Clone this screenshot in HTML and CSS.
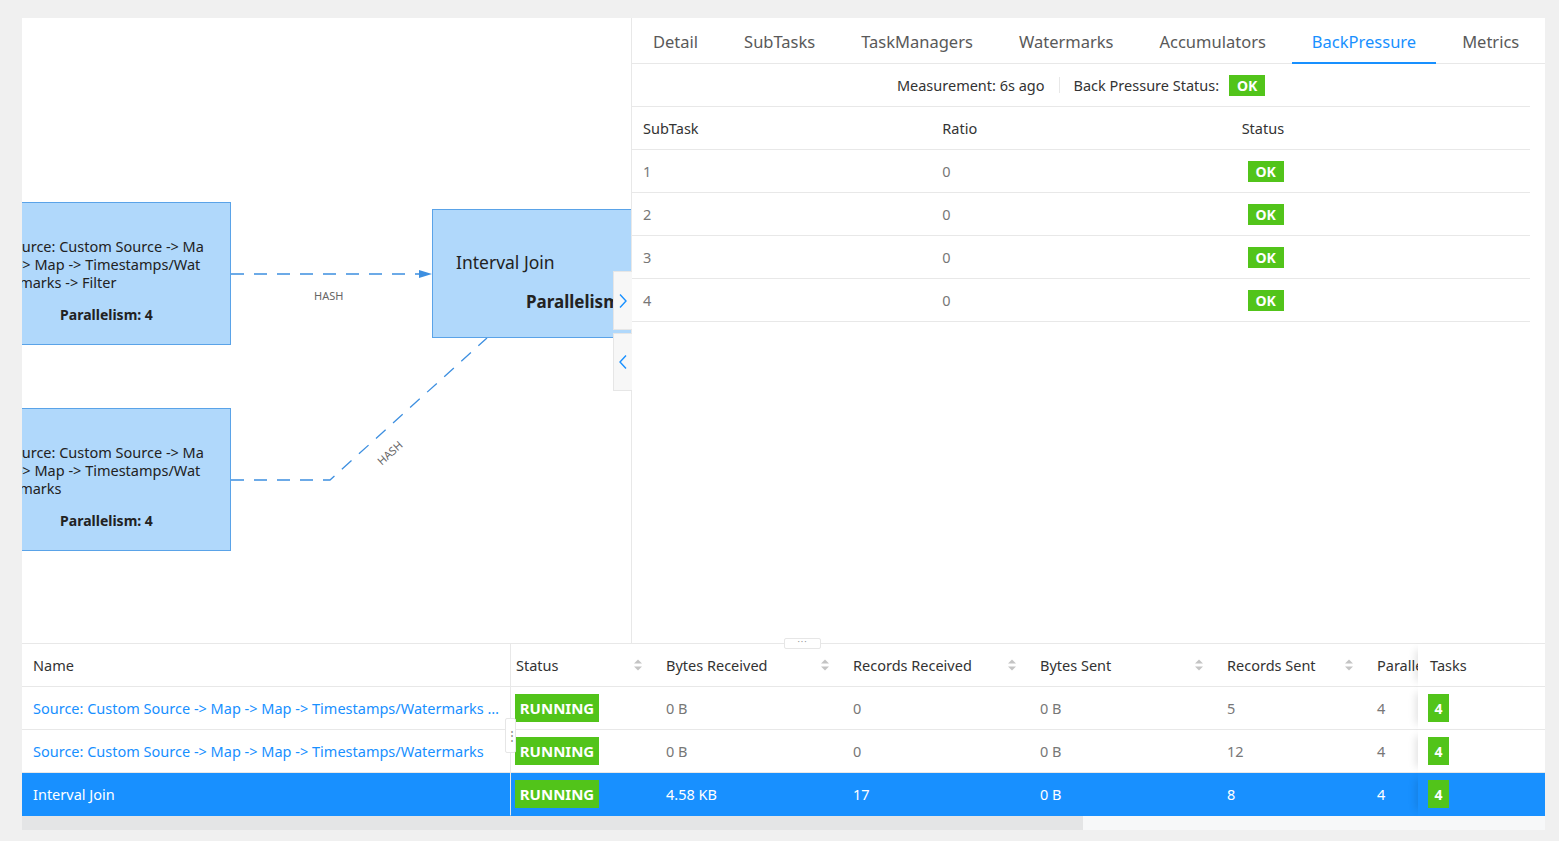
FILE: index.html
```html
<!DOCTYPE html>
<html>
<head>
<meta charset="utf-8">
<title>Job Overview</title>
<link rel="stylesheet" href="styles.css">
</head>
<body>
<div class="card">
  <div class="top">
    <div class="graph">
      <svg class="edges" width="609" height="625" viewBox="0 0 609 625">
        <path d="M209 256 H398" class="edge"/>
        <polygon points="397,252 410,256 397,260" class="arrow"/>
        <text x="292" y="282" class="edge-label">HASH</text>
        <path d="M209 462 H308 L465 320" class="edge"/>
        <text x="368" y="439" class="edge-label" text-anchor="middle" transform="rotate(-42 368 435)">HASH</text>
      </svg>
      <div class="node node-src node-a">
        <div class="node-lines">
          <div>Source: Custom Source -&gt; Ma</div>
          <div>p -&gt; Map -&gt; Timestamps/Wat</div>
          <div>ermarks -&gt; Filter</div>
        </div>
        <div class="node-par">Parallelism: 4</div>
      </div>
      <div class="node node-src node-b">
        <div class="node-lines">
          <div>Source: Custom Source -&gt; Ma</div>
          <div>p -&gt; Map -&gt; Timestamps/Wat</div>
          <div>ermarks</div>
        </div>
        <div class="node-par">Parallelism: 4</div>
      </div>
      <div class="node node-join">
        <div class="join-name">Interval Join</div>
        <div class="join-par">Parallelism: 4</div>
      </div>
    </div>
    <div class="panel">
      <div class="tabs">
        <div class="tab">Detail</div>
        <div class="tab">SubTasks</div>
        <div class="tab">TaskManagers</div>
        <div class="tab">Watermarks</div>
        <div class="tab">Accumulators</div>
        <div class="tab active">BackPressure</div>
        <div class="tab">Metrics</div>
      </div>
      <div class="bp">
        <div class="bp-status">
          <span>Measurement: 6s ago</span>
          <span class="divider"></span>
          <span>Back Pressure Status:</span>
          <span class="badge badge-ok status-ok">OK</span>
        </div>
        <div class="bp-row bp-head">
          <div class="bp-cell">SubTask</div>
          <div class="bp-cell">Ratio</div>
          <div class="bp-cell">Status</div>
        </div>
        <div class="bp-row">
          <div class="bp-cell">1</div>
          <div class="bp-cell">0</div>
          <div class="bp-cell bp-st"><span class="badge badge-ok">OK</span></div>
        </div>
        <div class="bp-row">
          <div class="bp-cell">2</div>
          <div class="bp-cell">0</div>
          <div class="bp-cell bp-st"><span class="badge badge-ok">OK</span></div>
        </div>
        <div class="bp-row">
          <div class="bp-cell">3</div>
          <div class="bp-cell">0</div>
          <div class="bp-cell bp-st"><span class="badge badge-ok">OK</span></div>
        </div>
        <div class="bp-row">
          <div class="bp-cell">4</div>
          <div class="bp-cell">0</div>
          <div class="bp-cell bp-st"><span class="badge badge-ok">OK</span></div>
        </div>
      </div>
    </div>
    <button class="collapse collapse-right"><svg width="10" height="16" viewBox="0 0 10 16"><path d="M2 1.5 L8 8 L2 14.5"/></svg></button>
    <button class="collapse collapse-left"><svg width="10" height="16" viewBox="0 0 10 16"><path d="M8 1.5 L2 8 L8 14.5"/></svg></button>
  </div>

  <div class="vtable">
    <div class="vrow vhead">
      <div class="cell name">Name</div>
      <div class="cell status"><span>Status</span><svg class="sort" width="10" height="14" viewBox="0 0 10 14"><path d="M1 5.5 L5 1.5 L9 5.5Z M1 8.5 L5 12.5 L9 8.5Z"/></svg></div>
      <div class="cell"><span>Bytes Received</span><svg class="sort" width="10" height="14" viewBox="0 0 10 14"><path d="M1 5.5 L5 1.5 L9 5.5Z M1 8.5 L5 12.5 L9 8.5Z"/></svg></div>
      <div class="cell"><span>Records Received</span><svg class="sort" width="10" height="14" viewBox="0 0 10 14"><path d="M1 5.5 L5 1.5 L9 5.5Z M1 8.5 L5 12.5 L9 8.5Z"/></svg></div>
      <div class="cell"><span>Bytes Sent</span><svg class="sort" width="10" height="14" viewBox="0 0 10 14"><path d="M1 5.5 L5 1.5 L9 5.5Z M1 8.5 L5 12.5 L9 8.5Z"/></svg></div>
      <div class="cell"><span>Records Sent</span><svg class="sort" width="10" height="14" viewBox="0 0 10 14"><path d="M1 5.5 L5 1.5 L9 5.5Z M1 8.5 L5 12.5 L9 8.5Z"/></svg></div>
      <div class="cell clip">Parallelism</div>
      <div class="cell tasks tasks-head">Tasks</div>
      <div class="cell tail"></div>
    </div>
    <div class="vrow">
      <div class="cell name"><span class="link">Source: Custom Source -&gt; Map -&gt; Map -&gt; Timestamps/Watermarks -&gt; Filter</span></div>
      <div class="cell status"><span class="badge badge-run">RUNNING</span></div>
      <div class="cell val">0 B</div>
      <div class="cell val">0</div>
      <div class="cell val">0 B</div>
      <div class="cell val">5</div>
      <div class="cell val clip">4</div>
      <div class="cell tasks"><span class="badge badge-task">4</span></div>
      <div class="cell tail"></div>
    </div>
    <div class="vrow">
      <div class="cell name"><span class="link">Source: Custom Source -&gt; Map -&gt; Map -&gt; Timestamps/Watermarks</span></div>
      <div class="cell status"><span class="badge badge-run">RUNNING</span></div>
      <div class="cell val">0 B</div>
      <div class="cell val">0</div>
      <div class="cell val">0 B</div>
      <div class="cell val">12</div>
      <div class="cell val clip">4</div>
      <div class="cell tasks"><span class="badge badge-task">4</span></div>
      <div class="cell tail"></div>
    </div>
    <div class="vrow selected">
      <div class="cell name"><span>Interval Join</span></div>
      <div class="cell status"><span class="badge badge-run">RUNNING</span></div>
      <div class="cell val">4.58 KB</div>
      <div class="cell val">17</div>
      <div class="cell val">0 B</div>
      <div class="cell val">8</div>
      <div class="cell val clip">4</div>
      <div class="cell tasks"><span class="badge badge-task">4</span></div>
      <div class="cell tail"></div>
    </div>
  </div>
  <div class="hscroll"><div class="thumb"></div></div>

  <div class="split-h">···</div>
  <div class="split-v">⋮</div>
</div>
</body>
</html>
```

FILE: styles.css
```css
* { box-sizing: border-box; margin: 0; padding: 0; }

body {
  background: #f0f0f0;
  font-family: "Noto Sans", "Open Sans", sans-serif;
  font-size: 14.5px;
  color: #333;
}

.card {
  position: relative;
  margin: 18px 0 0 22px;
  width: 1523px;
  height: 812px;
  background: #fff;
}

/* ---------- top area ---------- */
.top {
  position: relative;
  display: flex;
  height: 626px;
  border-bottom: 1px solid #e8e8e8;
}

.graph {
  position: relative;
  width: 610px;
  flex: none;
  border-right: 1px solid #e8e8e8;
  overflow: hidden;
}

.edges { position: absolute; left: 0; top: 0; }
.edge { fill: none; stroke: #3d8fe0; stroke-width: 1.3; stroke-dasharray: 13 10; }
.arrow { fill: #3d8fe0; }
.edge-label { font-family: "Noto Sans", sans-serif; font-size: 11px; fill: #666; }

.node {
  position: absolute;
  background: #b0d8fb;
  border: 1px solid #5aa3e8;
  color: #222;
  white-space: nowrap;
}

.node-src {
  left: -40px;
  width: 249px;
  height: 143px;
  padding: 34px 22px 0;
}
.node-a { top: 184px; }
.node-b { top: 390px; }

.node-lines { font-size: 14.5px; line-height: 18px; }
.node-par {
  margin-top: 15px;
  text-align: center;
  font-size: 14px;
  font-weight: 700;
  line-height: 18px;
}

.node-join {
  left: 410px;
  top: 191px;
  width: 260px;
  height: 129px;
  padding: 41px 0 0 23px;
  font-size: 17.5px;
  line-height: 22px;
}
.join-par { margin-top: 18px; padding-left: 70px; font-weight: 700; font-size: 17px; }

.collapse {
  position: absolute;
  left: 591px;
  width: 19px;
  background: #f7f7f7;
  border: 1px solid #e6e6e6;
  border-right: none;
  display: flex;
  align-items: center;
  justify-content: center;
  cursor: pointer;
}
.collapse svg path { fill: none; stroke: #1890ff; stroke-width: 1.4; }
.collapse-right { top: 253px; height: 59px; }
.collapse-left { top: 315px; height: 58px; }

/* ---------- right panel ---------- */
.panel { flex: 1; display: flex; flex-direction: column; }

.tabs {
  display: flex;
  height: 46px;
  padding-left: 1px;
  border-bottom: 1px solid #e8e8e8;
}
.tab {
  position: relative;
  padding: 0 20px;
  margin-right: 6px;
  height: 45px;
  line-height: 48px;
  font-size: 16.5px;
  color: #595959;
  white-space: nowrap;
}
.tab.active { color: #1890ff; }
.tab.active::after {
  content: "";
  position: absolute;
  left: 0; right: 0; bottom: -1px;
  height: 2px;
  background: #1890ff;
}

.bp { width: 898px; }

.bp-status {
  height: 43px;
  border-bottom: 1px solid #e8e8e8;
  display: flex;
  align-items: center;
  justify-content: center;
  color: #333;
}
.divider {
  width: 1px;
  height: 16px;
  background: #e8e8e8;
  margin: 0 14px;
}

.badge {
  display: inline-flex;
  align-items: center;
  justify-content: center;
  background: #52c41a;
  color: #fff;
  font-weight: 700;
}
.badge-ok { width: 36px; height: 21px; font-size: 14px; }
.status-ok { margin-left: 10px; }
.badge-run { width: 84px; height: 28px; font-size: 15px; }
.badge-task { width: 21px; height: 28px; font-size: 14px; }

.bp-row {
  display: grid;
  grid-template-columns: repeat(3, 1fr);
  height: 43px;
  border-bottom: 1px solid #e8e8e8;
  align-items: center;
  color: #777;
}
.bp-head { color: #333; }
.bp-cell { padding-left: 11px; }
.bp-st { padding-left: 17px; }

/* ---------- vertex table ---------- */
.vrow {
  display: grid;
  grid-template-columns: 489px 144px 187px 187px 187px 150px 52px 125px 2px;
  height: 43px;
}
.cell {
  display: flex;
  align-items: center;
  overflow: hidden;
  white-space: nowrap;
  padding: 0 12px 0 11px;
  background: #fff;
  border-bottom: 1px solid #e8e8e8;
  color: #777;
}
.vhead .cell { justify-content: space-between; color: #333; }
.cell.name { border-right: 1px solid #e8e8e8; padding-right: 8px; }
.cell.status { padding-left: 4px; }
.vhead .cell.status { padding-left: 5px; }
.cell.clip { padding-right: 0; }
.cell.tasks {
  position: relative;
  padding-left: 10px;
  box-shadow: -8px 0 8px -6px rgba(0, 0, 0, 0.12);
}
.vhead .cell.tasks { padding-left: 12px; justify-content: flex-start; }
.cell.tail { padding: 0; }

.name span {
  display: block;
  overflow: hidden;
  text-overflow: ellipsis;
}
.link { color: #1890ff; }

.sort { flex: none; }
.sort path { fill: #c4c4c4; }

.selected .cell {
  background: #1890ff;
  color: #fff;
  border-bottom-color: #1890ff;
}

.hscroll {
  height: 14px;
  background: #f7f8f9;
}
.thumb {
  width: 1061px;
  height: 100%;
  background: #e4e5e6;
}

/* ---------- split handles ---------- */
.split-h {
  position: absolute;
  left: 762px;
  top: 620px;
  width: 37px;
  height: 11px;
  background: #fff;
  border: 1px solid #e6e6e6;
  border-radius: 2px;
  font-size: 9px;
  line-height: 6px;
  text-align: center;
  color: #999;
  letter-spacing: 1px;
}
.split-v {
  position: absolute;
  left: 483px;
  top: 700px;
  width: 11px;
  height: 35px;
  background: #fff;
  border: 1px solid #e6e6e6;
  border-radius: 2px;
  font-size: 12px;
  line-height: 33px;
  text-align: center;
  color: #888;
}
```
